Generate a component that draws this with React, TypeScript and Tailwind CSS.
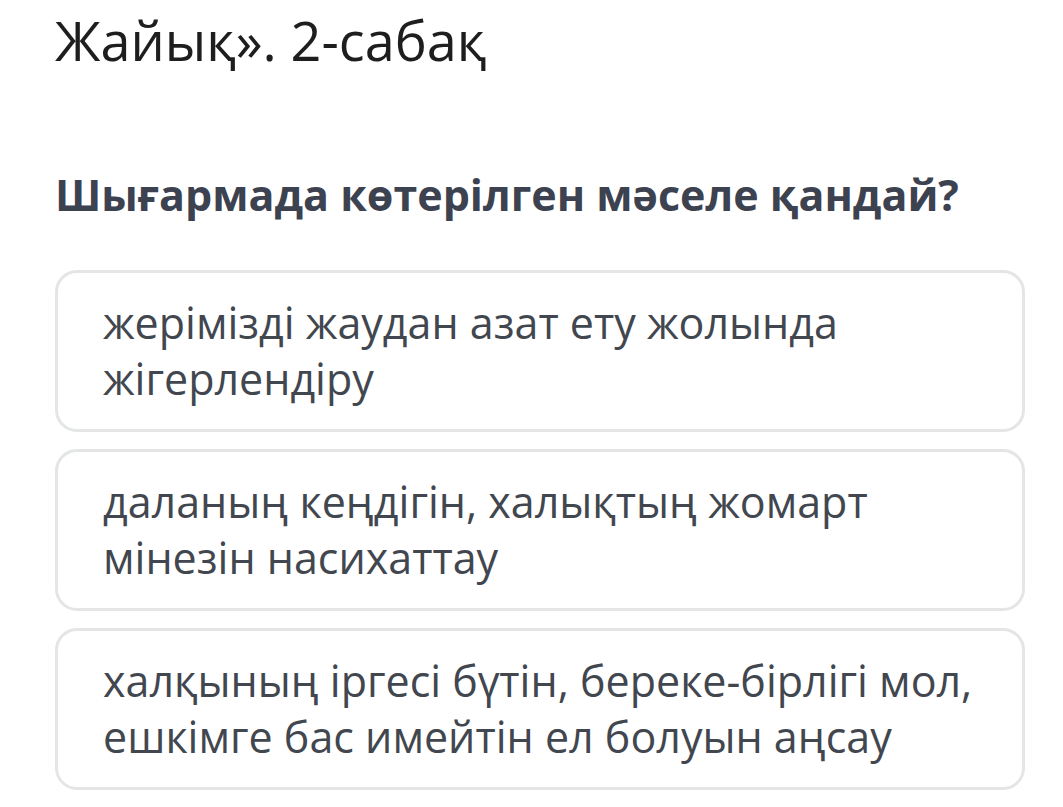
import React from 'react';

const options = [
  'жерімізді жаудан азат ету жолында жігерлендіру',
  'даланың кеңдігін, халықтың жомарт мінезін насихаттау',
  'халқының іргесі бүтін, береке-бірлігі мол, ешкімге бас имейтін ел болуын аңсау',
];

export default function App() {
  return (
    <div className="w-[1063px] h-[807px] overflow-hidden bg-white font-['Open_Sans',sans-serif]">
      <div className="pl-[55px] pr-[38px]">
        <h1 className="mt-0 text-[54px] leading-[80px] font-normal text-[#1e1e1e]">
          Жайық». 2-сабақ
        </h1>
        <h2 className="mt-[89px] text-[43px] leading-[52px] font-bold text-[#3c4250]">
          Шығармада көтерілген мәселе қандай?
        </h2>
        <div className="mt-[49px] flex flex-col gap-[17px]">
          {options.map((text, i) => (
            <div
              key={i}
              className="h-[162px] rounded-[22px] border-[3px] border-[#e3e5e6] pl-[45px] pr-[40px] flex items-center"
            >
              <p className="text-[43px] leading-[56px] text-[#42474f]">{text}</p>
            </div>
          ))}
        </div>
      </div>
    </div>
  );
}
